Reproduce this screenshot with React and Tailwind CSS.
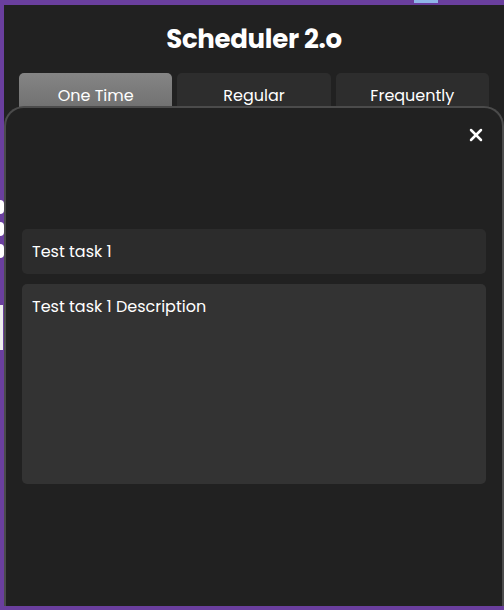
import { X } from 'lucide-react';

const tabs = ['One Time', 'Regular', 'Frequently'];

export default function App() {
  const font = { fontFamily: 'Poppins, Lato, "Noto Sans", sans-serif' };

  return (
    <div className="relative w-[504px] h-[610px] bg-[#6a3f9e] overflow-hidden flex pt-[5px] pb-[4px]" style={font}>
      {/* bits of the page behind the scheduler */}
      <div className="w-[4px] shrink-0 flex flex-col pt-[195px] gap-[8px]">
        <div className="h-[14px] rounded-r-full bg-white" />
        <div className="h-[14px] rounded-r-full bg-white" />
        <div className="h-[14px] rounded-r-full bg-white" />
        <div className="mt-[39px] w-[3px] h-[45px] bg-[#eeeeee]" />
      </div>
      <div className="absolute left-[414px] top-0 w-[24px] h-[3px] bg-[#8fb6e8]" />

      <div className="flex-1 bg-[#212121] flex flex-col">
        <h1 className="text-center text-white font-bold text-[26px] leading-none pt-[21px] tracking-[-0.3px]">
          Scheduler 2.o
        </h1>

        <div className="flex gap-[5px] px-[15px] mt-[21px] h-[40px]">
          {tabs.map((t, i) => (
            <div
              key={t}
              className={
                'flex-1 rounded-t-[5px] flex items-start justify-center pt-[11px] text-[16px] text-white ' +
                (i === 0 ? 'bg-gradient-to-b from-[#858585] to-[#6e6e6e]' : 'bg-[#2d2d2d]')
              }
            >
              {t}
            </div>
          ))}
        </div>

        <div className="flex-1 -mt-[7px] rounded-t-[20px] border-2 border-b-0 border-[#4b4b4b] bg-[#212121] px-[16px] pt-[17px] flex flex-col">
          <div className="flex justify-end pr-0">
            <button className="text-white">
              <X size={20} strokeWidth={3} />
            </button>
          </div>
          <div className="mt-[84px] h-[45px] rounded-[5px] bg-[#2c2c2c] flex items-center px-[10px] text-white text-[16px]">
            Test task 1
          </div>
          <div className="mt-[10px] h-[200px] rounded-[5px] bg-[#333333] px-[10px] pt-[11px] text-white text-[16px]">
            Test task 1 Description
          </div>
        </div>
      </div>
    </div>
  );
}
